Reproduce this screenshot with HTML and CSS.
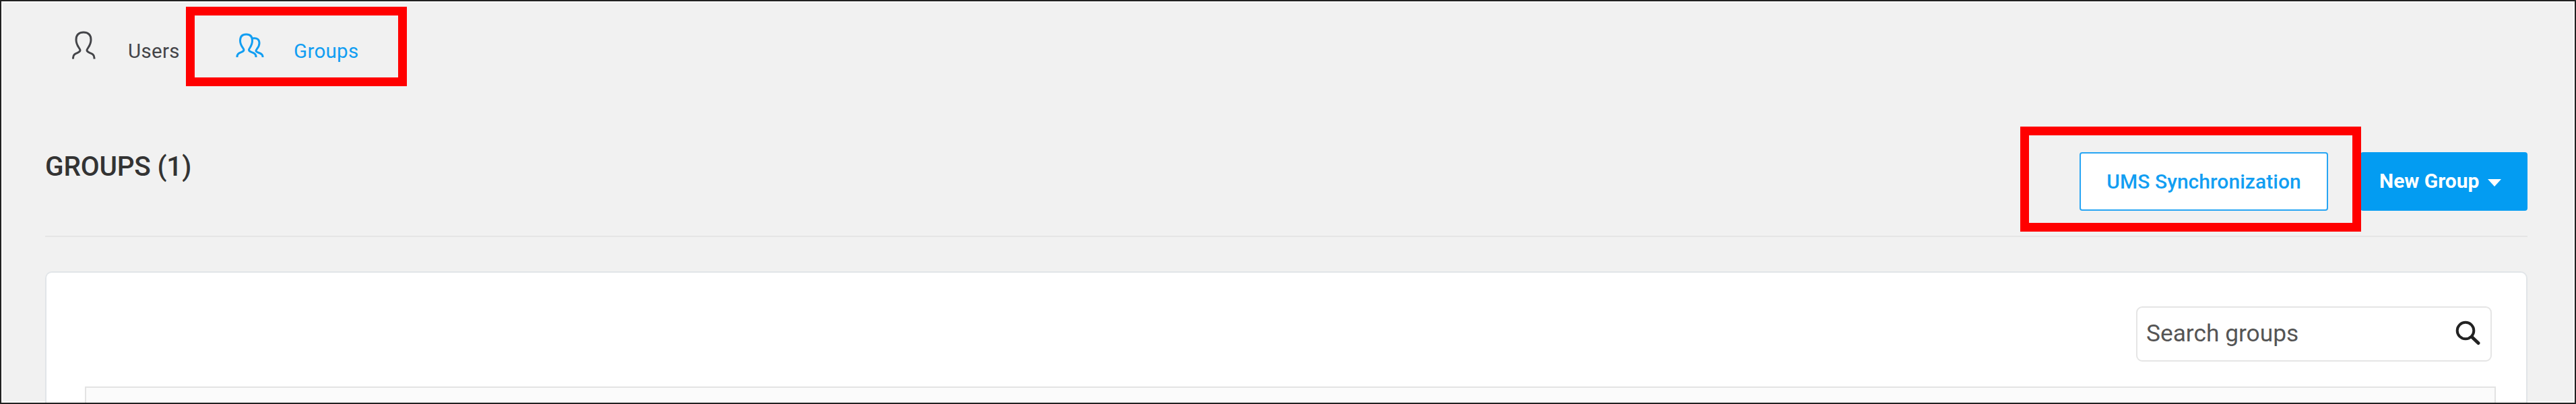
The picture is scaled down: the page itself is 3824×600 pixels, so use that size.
FILE: index.html
```html
<!DOCTYPE html>
<html lang="en">
<head>
<meta charset="utf-8">
<title>Groups</title>
<link rel="stylesheet" href="styles.css">
</head>
<body>
<div class="frame">
  <nav class="tabs">
    <a class="tab tab-users">
      <svg class="tab-icon" width="40" height="46" viewBox="0 0 40 46"><path d="M4.500 42.500V41C4.500 32 15 35 15 29.500C15 27 9 23 9 14C9 6.500 13.500 3 20 3S31 6.500 31 14C31 23 25 27 25 29.500C25 35 36 32 36 41V42.500"/></svg>
      <span>Users</span>
    </a>
    <a class="tab tab-groups">
      <svg class="tab-icon" width="46" height="40" viewBox="0 0 46 40"><path d="M3 36V35C3 27 13 30 13 25C13 23 7.500 19 7.500 11.500C7.500 5 11 2 16.500 2S25.500 5 25.500 11.500C25.500 19 20.500 23 20.500 25C20.500 30 31 27 31 35V36M25.500 8C33 6.500 36 10 36 15C36 21.500 31 24 31 26.500C31 30 41 28.500 41 35V36"/></svg>
      <span>Groups</span>
    </a>
  </nav>
  <header class="page-head">
    <h1 class="title">GROUPS (1)</h1>
    <div class="actions">
      <button class="btn btn-outline">UMS Synchronization</button>
      <button class="btn btn-primary"><span>New Group</span><svg class="caret" width="20" height="11" viewBox="0 0 20 11"><path d="M0 0H20L10 11Z"/></svg></button>
    </div>
  </header>
  <main class="card">
    <div class="search">
      <span>Search groups</span>
      <svg class="search-icon" width="38" height="38" viewBox="0 0 38 38"><circle cx="15" cy="15" r="12.300"/><path class="handle" d="M24.500 24.500L34 33.500"/></svg>
    </div>
    <div class="table"></div>
  </main>
  <div class="mark mark-tab"></div>
  <div class="mark mark-sync"></div>
</div>
</body>
</html>
```
FILE: styles.css
```css
* { box-sizing: border-box; }
body { margin: 0; font-family: Roboto, sans-serif; color: #333; }
.frame { position: relative; display: flex; flex-direction: column; width: 3824px; height: 600px; overflow: hidden; background: #f1f1f1; border: 2px solid #222; box-shadow: inset 0 0 0 2px #fff; }
.tabs { display: flex; flex: none; height: 186px; padding: 42px 0 0 102px; font-size: 29.5px; line-height: 36px; letter-spacing: 0.3px; color: #444549; }
.tab { display: flex; align-items: flex-start; }
.tab span { margin-top: 14px; }
.tab-icon { fill: none; stroke: currentColor; stroke-width: 3; flex: none; }
.tab-users { width: 245px; gap: 46px; }
.tab-users .tab-icon { margin-top: 1px; }
.tab-groups { gap: 41px; color: #129ef2; }
.tab-groups .tab-icon { margin-top: 5px; }
.page-head { display: flex; flex: none; justify-content: space-between; height: 164px; margin: 0 70px 0 65px; border-bottom: 2px solid #e5e5e5; }
.title { margin: 34px 0 0; font-size: 40.5px; font-weight: 500; line-height: 50px; letter-spacing: -0.2px; }
.actions { display: flex; gap: 48px; margin-top: 38px; }
.btn { height: 87px; border: 0; border-radius: 4px; padding: 0; font: 500 30px Roboto, sans-serif; }
.btn-outline { width: 369px; background: #fff; border: 2.500px solid #27a5f3; color: #129ef2; letter-spacing: 0.05px; }
.btn-primary { display: flex; align-items: center; gap: 13px; width: 248px; padding: 0 0 3px 28px; background: #039cf2; color: #fff; font-weight: 700; }
.caret { margin-top: 6px; fill: currentColor; }
.card { flex: 1; min-height: 0; margin: 51px 70px 0 65px; padding: 50px 45px 0 57px; background: #fff; border: 2px solid #e1e5e8; border-bottom: 0; border-radius: 10px 10px 0 0; }
.search { display: flex; align-items: center; justify-content: space-between; width: 528px; height: 82px; margin: 0 6px 0 auto; padding: 0 14px 2px 13px; border: 2px solid #e5e5e5; border-radius: 9px; font-size: 35.3px; color: #555; }
.search-icon { fill: none; stroke: #222; stroke-width: 4; stroke-linecap: round; }
.handle { stroke-width: 5; }
.table { height: 40px; margin-top: 37px; background: #fbfbfb; border: 2px solid #e3e3e3; }
.mark { position: absolute; border: 13px solid #f00; }
.mark-tab { left: 274px; top: 8px; width: 328px; height: 118px; }
.mark-sync { left: 2997px; top: 186px; width: 506px; height: 156px; }
```
